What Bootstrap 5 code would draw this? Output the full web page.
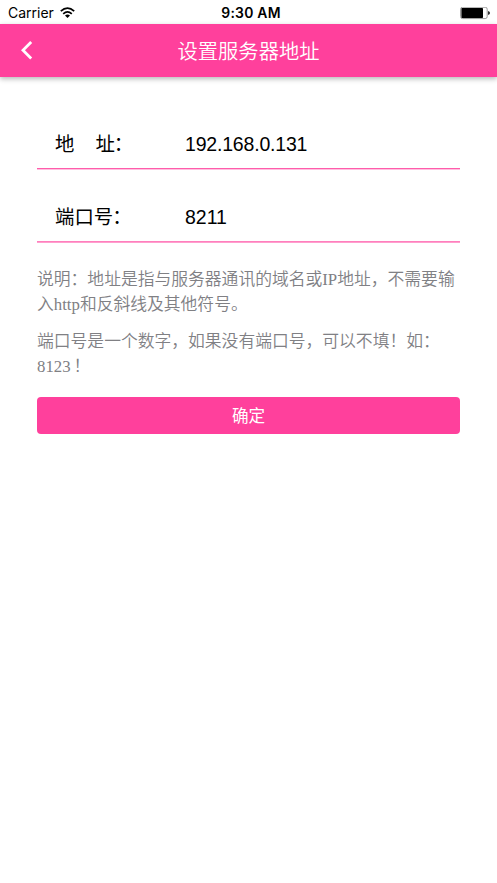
<!DOCTYPE html>
<html lang="zh-CN">
<head>
<meta charset="utf-8">
<meta name="viewport" content="width=device-width, initial-scale=1">
<title>设置服务器地址</title>
<link href="https://cdn.jsdelivr.net/npm/bootstrap@5.3.0/dist/css/bootstrap.min.css" rel="stylesheet">
<style>
:root { --pink: #ff409c; }
body { font-family: "Liberation Sans", "Noto Sans CJK SC", sans-serif; color: #000; }
.status-bar { height: 24px; font-family: Inter, "Liberation Sans", sans-serif; font-size: 14px; line-height: 24px; padding: 1px 7px 0 8px; }
.status-bar .clock { font-weight: 600; font-size: 13.9px; letter-spacing: .25px; padding-left: 4px; }
.wifi { margin-left: 6px; }
.app-bar { height: 53px; background: var(--pink); box-shadow: 0 2px 5px rgba(0,0,0,.28); padding: 0 20px; }
.app-title { font-size: 20.3px; line-height: 30px; font-weight: 350; padding-top: 2px; }
.app-side { width: 14px; }
.app-main { padding: 42px 37px 0; }
.field-row { height: 50px; border-bottom: 1px solid #ff5cab; box-shadow: 0 1px 0 #ffc0df; padding-left: 18px; font-size: 19.4px; line-height: 28px; }
.field-row + .field-row { margin-top: 23px; border-bottom-color: #ff7fbd; box-shadow: 0 1px 0 #ff9fce; }
.field-name { width: 130px; white-space: pre; }
.wide-gap { margin-left: 21px; }
.colon { margin-left: -1px; }
.field-value { font-size: 19.5px; letter-spacing: -.19px; border: 0; outline: 0; padding: 0; color: #000; background: none; line-height: 28px; }
#port { letter-spacing: 0; }
.hint { font-family: "Liberation Serif", "Noto Sans CJK SC", serif; font-size: 16.8px; font-weight: 350; line-height: 25px; color: #808084; margin-top: 25px; }
.hint p { margin-bottom: 12px; }
.bang { margin-left: 3px; }
.btn-pink { --bs-btn-bg: var(--pink); --bs-btn-color: #fff; --bs-btn-hover-bg: #ee318c; --bs-btn-hover-color: #fff; height: 37px; font-size: 16.6px; line-height: 24px; border: 0; border-radius: 4px; padding: 2px 0 0; margin-top: 6px; }
</style>
</head>
<body class="bg-white">
<div class="status-bar row g-0 align-items-center">
  <div class="col d-flex align-items-center"><span>Carrier</span>
    <svg class="wifi" width="15" height="12" viewBox="0 0 15 12" fill="none" stroke="#000" stroke-width="1.7"><path d="M.8 4.2Q7.5-2 14.2 4.2M3.2 6.8Q7.5 3 11.8 6.8"/><path d="M5 8.4Q7.5 6.6 10 8.4L7.5 11Z" fill="#000" stroke="none"/></svg>
  </div>
  <div class="col-auto clock">9:30 AM</div>
  <div class="col d-flex justify-content-end align-items-center">
    <svg width="30" height="13" viewBox="0 0 30 13"><rect x=".6" y=".2" width="26.6" height="11.4" rx="2" fill="#fff" stroke="#999" stroke-width="1"/><rect x="1.4" y="1" width="21.6" height="10" rx=".7"/><path d="M28 4.3h.8q1.2.4 1.2 1.7t-1.2 1.7H28z" fill="#333"/></svg>
  </div>
</div>
<header class="app-bar d-flex align-items-center justify-content-between text-white">
  <a href="#" class="app-side d-flex text-white" aria-label="返回"><svg width="14" height="20" viewBox="0 0 14 20" fill="none" stroke="currentColor" stroke-width="2.8"><path d="M11.2 1 3 9.2 11.2 17.4"/></svg></a>
  <h1 class="app-title mb-0">设置服务器地址</h1>
  <span class="app-side"></span>
</header>
<main class="app-main">
  <div class="field-row d-flex align-items-center"><label class="field-name" for="host">地<span class="wide-gap">址</span><span class="colon">：</span></label><input id="host" class="field-value flex-grow-1" value="192.168.0.131"></div>
  <div class="field-row d-flex align-items-center"><label class="field-name" for="port">端口号<span class="colon">：</span></label><input id="port" class="field-value flex-grow-1" value="8211"></div>
  <div class="hint">
    <p>说明：地址是指与服务器通讯的域名或IP地址，不需要输<br>入http和反斜线及其他符号。</p>
    <p>端口号是一个数字，如果没有端口号，可以不填！如：<br>8123<span class="bang">！</span></p>
  </div>
  <button type="button" class="btn btn-pink w-100">确定</button>
</main>
<script src="https://cdn.jsdelivr.net/npm/bootstrap@5.3.0/dist/js/bootstrap.bundle.min.js"></script>
</body>
</html>
